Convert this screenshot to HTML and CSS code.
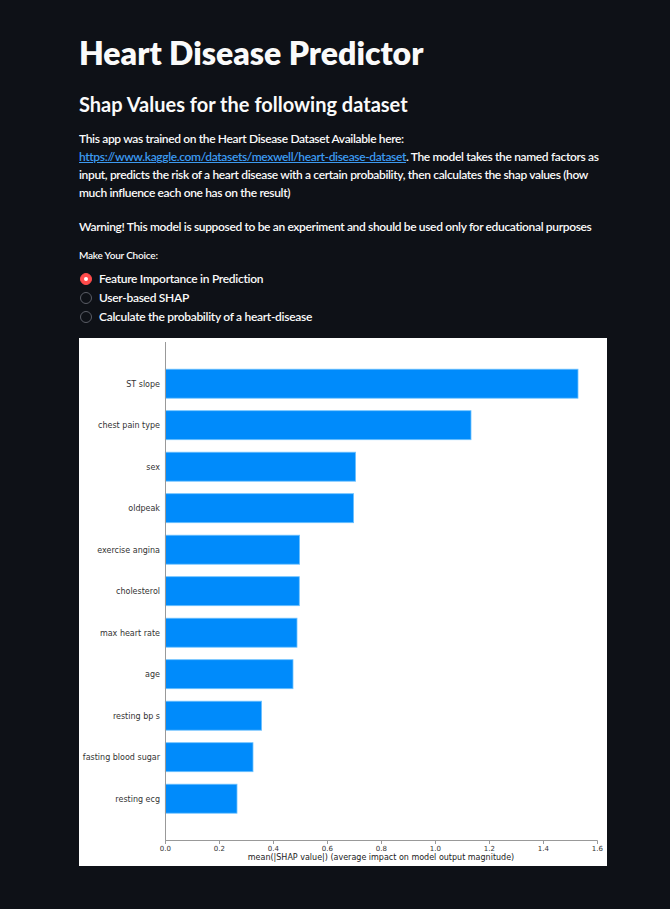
FILE: index.html
```html
<!DOCTYPE html>
<html lang="en">
<head>
<meta charset="utf-8">
<title>Heart Disease Predictor</title>
<link rel="stylesheet" href="styles.css">
</head>
<body>
<main class="main">
  <h1 class="title">Heart Disease Predictor</h1>
  <h2 class="subtitle">Shap Values for the following dataset</h2>
  <p class="text">This app was trained on the Heart Disease Dataset Available here: <a class="link" href="#">https://www.kaggle.com/datasets/mexwell/heart-disease-dataset</a>. The model takes the named factors as input, predicts the risk of a heart disease with a certain probability, then calculates the shap values (how much influence each one has on the result)</p>
  <p class="text warn">Warning! This model is supposed to be an experiment and should be used only for educational purposes</p>
  <div class="radio-group">
    <div class="radio-label">Make Your Choice:</div>
    <label class="radio"><span class="dot checked"></span><span>Feature Importance in Prediction</span></label>
    <label class="radio"><span class="dot"></span><span>User-based SHAP</span></label>
    <label class="radio"><span class="dot"></span><span>Calculate the probability of a heart-disease</span></label>
  </div>
  <div class="chart">
    <svg width="528" height="528" viewBox="0 0 528 528" xmlns="http://www.w3.org/2000/svg">
      <g class="bars" fill="#008bfb" stroke="#6ec2ff" stroke-width="0.8">
        <rect x="86.3" y="31.2" width="412.7" height="29"/>
        <rect x="86.3" y="72.7" width="305.7" height="29"/>
        <rect x="86.3" y="114.2" width="190.3" height="29"/>
        <rect x="86.3" y="155.7" width="188.3" height="29"/>
        <rect x="86.3" y="197.2" width="134.3" height="29"/>
        <rect x="86.3" y="238.7" width="134" height="29"/>
        <rect x="86.3" y="280.2" width="131.7" height="29"/>
        <rect x="86.3" y="321.7" width="127.7" height="29"/>
        <rect x="86.3" y="363.2" width="96.3" height="29"/>
        <rect x="86.3" y="404.7" width="87.7" height="29"/>
        <rect x="86.3" y="446.2" width="71.7" height="29"/>
      </g>
      <g class="ylabels" font-family="DejaVu Sans, sans-serif" font-size="8" fill="#333" text-anchor="end">
        <text x="81" y="48.5">ST slope</text>
        <text x="81" y="90">chest pain type</text>
        <text x="81" y="131.5">sex</text>
        <text x="81" y="173">oldpeak</text>
        <text x="81" y="214.5">exercise angina</text>
        <text x="81" y="256">cholesterol</text>
        <text x="81" y="297.5">max heart rate</text>
        <text x="81" y="339">age</text>
        <text x="81" y="380.5">resting bp s</text>
        <text x="81" y="422">fasting blood sugar</text>
        <text x="81" y="463.5">resting ecg</text>
      </g>
      <g stroke="#999" stroke-width="1" fill="none">
        <line x1="86.5" y1="4" x2="86.5" y2="503"/>
        <line x1="86" y1="502.5" x2="518.5" y2="502.5"/>
        <line x1="86.5" y1="502.5" x2="86.5" y2="506"/>
        <line x1="140.5" y1="502.5" x2="140.5" y2="506"/>
        <line x1="194.5" y1="502.5" x2="194.5" y2="506"/>
        <line x1="248.5" y1="502.5" x2="248.5" y2="506"/>
        <line x1="302.5" y1="502.5" x2="302.5" y2="506"/>
        <line x1="356.5" y1="502.5" x2="356.5" y2="506"/>
        <line x1="410.5" y1="502.5" x2="410.5" y2="506"/>
        <line x1="464.5" y1="502.5" x2="464.5" y2="506"/>
        <line x1="518.5" y1="502.5" x2="518.5" y2="506"/>
      </g>
      <g font-family="DejaVu Sans, sans-serif" font-size="7" fill="#333" text-anchor="middle">
        <text x="86.3" y="512.5">0.0</text>
        <text x="140.3" y="512.5">0.2</text>
        <text x="194.3" y="512.5">0.4</text>
        <text x="248.3" y="512.5">0.6</text>
        <text x="302.3" y="512.5">0.8</text>
        <text x="356.3" y="512.5">1.0</text>
        <text x="410.3" y="512.5">1.2</text>
        <text x="464.3" y="512.5">1.4</text>
        <text x="518.3" y="512.5">1.6</text>
      </g>
      <text x="302" y="522.3" font-family="DejaVu Sans, sans-serif" font-size="8" fill="#222" text-anchor="middle">mean(|SHAP value|) (average impact on model output magnitude)</text>
    </svg>
  </div>
</main>
</body>
</html>
```
FILE: styles.css
```css
html, body {
  margin: 0;
  padding: 0;
  background: #0e1117;
}
body {
  font-family: "Lato", "Open Sans", sans-serif;
  color: #fafafa;
  width: 670px;
  height: 909px;
  overflow: hidden;
}
.main {
  padding: 29px 63px 0 79px;
}
.title {
  margin: 0;
  font-size: 32px;
  font-weight: 800;
  line-height: 48px;
}
.subtitle {
  margin: 12px 0 0;
  font-size: 20px;
  font-weight: 700;
  line-height: 30px;
}
.text {
  margin: 11px 0 0;
  font-size: 12px;
  letter-spacing: -0.35px;
  line-height: 18px;
  font-weight: 600;
}
.warn {
  margin-top: 16px;
}
.link {
  color: #3c9af0;
  text-decoration: underline;
}
.radio-group {
  margin-top: 11px;
  display: flex;
  flex-direction: column;
}
.radio-label {
  font-size: 10px;
  letter-spacing: -0.2px;
  font-weight: 600;
  line-height: 16px;
  margin-bottom: 6px;
}
.radio {
  display: flex;
  align-items: center;
  gap: 7px;
  font-size: 12px;
  letter-spacing: -0.3px;
  font-weight: 600;
  line-height: 19px;
  padding-left: 1px;
}
.dot {
  width: 10px;
  height: 10px;
  border-radius: 50%;
  border: 1px solid #5a5d66;
  box-sizing: content-box;
  flex: none;
  position: relative;
}
.dot.checked {
  background: #ff4b4b;
  border-color: #ff4b4b;
}
.dot.checked::after {
  content: "";
  position: absolute;
  left: 3px;
  top: 3px;
  width: 4px;
  height: 4px;
  border-radius: 50%;
  background: #fff;
}
.chart {
  margin-top: 12px;
  width: 528px;
  height: 528px;
  background: #fff;
}
.chart svg {
  display: block;
}
```
